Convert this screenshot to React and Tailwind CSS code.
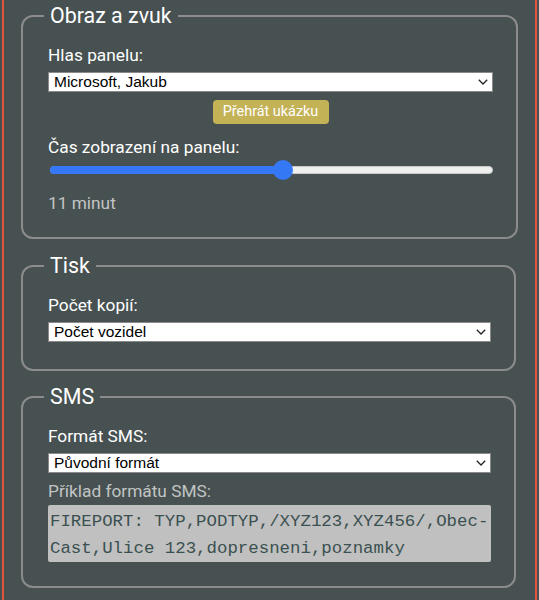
import React from "react";

const sans = { fontFamily: "Roboto, 'Noto Sans', sans-serif" };

function Chevron() {
  return (
    <svg
      className="pointer-events-none absolute right-[5px] top-1/2 -translate-y-1/2"
      width="10"
      height="6"
      viewBox="0 0 10 6"
      fill="none"
    >
      <path d="M0.8 0.8 L5 5 L9.2 0.8" stroke="#222" strokeWidth="1.3" />
    </svg>
  );
}

function Select({ value }) {
  return (
    <div className="relative mt-[5px] h-[20px] w-full">
      <select
        defaultValue={value}
        className="block h-[20px] w-full appearance-none border border-[#8a8a8a] bg-white pl-[5px] text-[15.5px] leading-[18px] text-black outline-none"
        style={{ fontFamily: "'Liberation Sans', Arial, sans-serif" }}
      >
        <option>{value}</option>
      </select>
      <Chevron />
    </div>
  );
}

function Group({ title, className, children }) {
  return (
    <fieldset
      className={`rounded-[12px] border-2 border-[#8c8c8c] pl-[25px] pr-[23px] ${className}`}
    >
      <legend className="ml-[-4px] px-[6px] text-[21.4px] leading-[24px] text-white">
        {title}
      </legend>
      {children}
    </fieldset>
  );
}

function Label({ children, muted }) {
  return (
    <div
      className={`text-[17.3px] leading-[24px] ${muted ? "text-[#c2c4c4]" : "text-white"}`}
    >
      {children}
    </div>
  );
}

function Slider({ percent }) {
  return (
    <div className="relative mt-[1px] ml-[2px] h-[20px] w-[443px]">
      <div className="absolute left-0 right-0 top-[6px] h-[8px] rounded-full border border-[#c8c8c8] bg-[#efefef]" />
      <div
        className="absolute left-0 top-[6px] h-[8px] rounded-full bg-[#3478f6]"
        style={{ width: `${percent}%` }}
      />
      <div
        className="absolute top-0 h-[20px] w-[20px] -translate-x-1/2 rounded-full bg-[#3478f6]"
        style={{ left: `${percent}%` }}
      />
    </div>
  );
}

export default function App() {
  return (
    <div className="min-h-screen w-full bg-[#475151]" style={sans}>
      <div className="mx-[2px] min-h-screen border-x-2 border-[#e5533d] pl-[17px] pr-[19px] pt-[4px] pb-[12px]">
        <Group title="Obraz a zvuk" className="pt-[15px] pb-[22px]">
          <Label>Hlas panelu:</Label>
          <Select value="Microsoft, Jakub" />
          <div className="mt-[8px] flex justify-center">
            <button className="h-[24px] w-[116px] rounded-[4px] bg-[#c4b257] text-[14.4px] leading-[24px] text-white">
              Přehrát ukázku
            </button>
          </div>
          <div className="mt-[11px]">
            <Label>Čas zobrazení na panelu:</Label>
          </div>
          <Slider percent={52.6} />
          <div className="mt-[11px]">
            <Label muted>11 minut</Label>
          </div>
        </Group>

        <Group title="Tisk" className="mt-[15px] pt-[15px] pb-[27px]">
          <Label>Počet kopií:</Label>
          <Select value="Počet vozidel" />
        </Group>

        <Group title="SMS" className="mt-[14px] pt-[15px] pb-[24px]">
          <Label>Formát SMS:</Label>
          <Select value="Původní formát" />
          <div className="mt-[6px]">
            <Label muted>Příklad formátu SMS:</Label>
          </div>
          <div
            className="mt-[2px] h-[57px] overflow-hidden whitespace-pre rounded-[2px] bg-[#c0c0c0] pl-[2px] pt-[3px] text-[17.4px] leading-[27px] text-[#3b5050]"
            style={{ fontFamily: "'Liberation Mono', 'Courier New', monospace" }}
          >
            {"FIREPORT: TYP,PODTYP,/XYZ123,XYZ456/,Obec-\nCast,Ulice 123,dopresneni,poznamky"}
          </div>
        </Group>
      </div>
    </div>
  );
}
